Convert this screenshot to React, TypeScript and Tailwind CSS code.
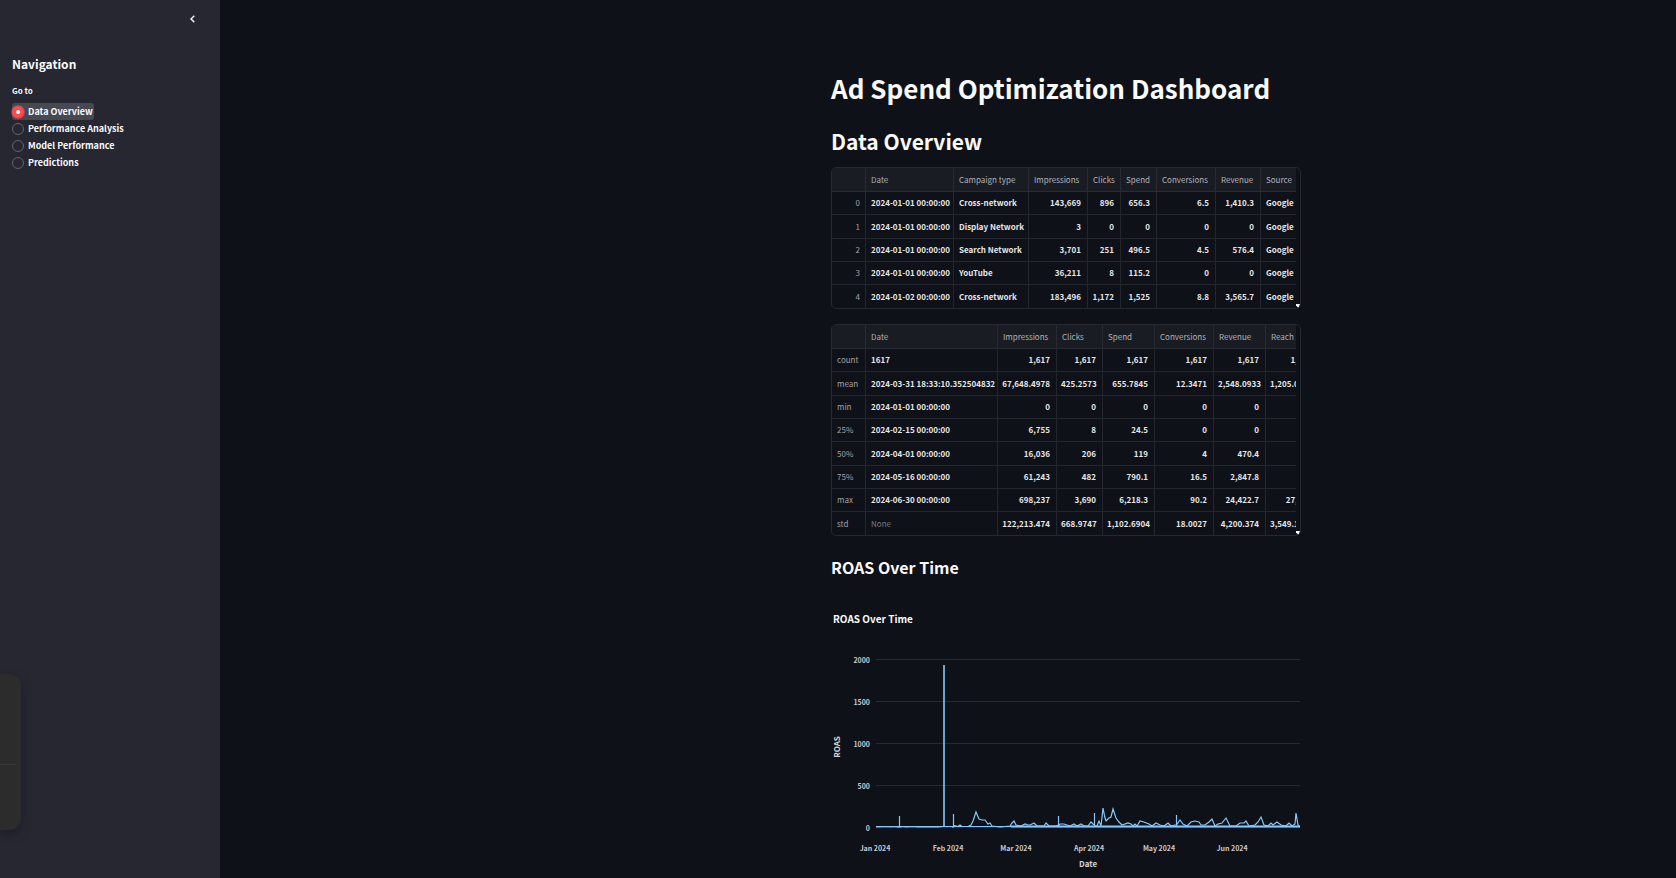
import React from "react";

type Column = { label: string; width: string; align: "left" | "right" };

const campaignColumns: Column[] = [
  { label: "", width: "w-[34px]", align: "right" },
  { label: "Date", width: "w-[88px]", align: "left" },
  { label: "Campaign type", width: "w-[75px]", align: "left" },
  { label: "Impressions", width: "w-[59px]", align: "right" },
  { label: "Clicks", width: "w-[33px]", align: "right" },
  { label: "Spend", width: "w-[36px]", align: "right" },
  { label: "Conversions", width: "w-[59px]", align: "right" },
  { label: "Revenue", width: "w-[45px]", align: "right" },
  { label: "Source", width: "w-[52px]", align: "left" },
];

const campaignRows: string[][] = [
  ["0", "2024-01-01 00:00:00", "Cross-network", "143,669", "896", "656.3", "6.5", "1,410.3", "Google"],
  ["1", "2024-01-01 00:00:00", "Display Network", "3", "0", "0", "0", "0", "Google"],
  ["2", "2024-01-01 00:00:00", "Search Network", "3,701", "251", "496.5", "4.5", "576.4", "Google"],
  ["3", "2024-01-01 00:00:00", "YouTube", "36,211", "8", "115.2", "0", "0", "Google"],
  ["4", "2024-01-02 00:00:00", "Cross-network", "183,496", "1,172", "1,525", "8.8", "3,565.7", "Google"],
];

const summaryColumns: Column[] = [
  { label: "", width: "w-[34px]", align: "left" },
  { label: "Date", width: "w-[132px]", align: "left" },
  { label: "Impressions", width: "w-[59px]", align: "right" },
  { label: "Clicks", width: "w-[46px]", align: "right" },
  { label: "Spend", width: "w-[52px]", align: "right" },
  { label: "Conversions", width: "w-[59px]", align: "right" },
  { label: "Revenue", width: "w-[52px]", align: "right" },
  { label: "Reach", width: "w-[53px]", align: "right" },
];

const summaryRows: string[][] = [
  ["count", "1617", "1,617", "1,617", "1,617", "1,617", "1,617", "1,617"],
  ["mean", "2024-03-31 18:33:10.352504832", "67,648.4978", "425.2573", "655.7845", "12.3471", "2,548.0933", "1,205.0124"],
  ["min", "2024-01-01 00:00:00", "0", "0", "0", "0", "0", ""],
  ["25%", "2024-02-15 00:00:00", "6,755", "8", "24.5", "0", "0", ""],
  ["50%", "2024-04-01 00:00:00", "16,036", "206", "119", "4", "470.4", ""],
  ["75%", "2024-05-16 00:00:00", "61,243", "482", "790.1", "16.5", "2,847.8", ""],
  ["max", "2024-06-30 00:00:00", "698,237", "3,690", "6,218.3", "90.2", "24,422.7", "27,112"],
  ["std", "None", "122,213.474", "668.9747", "1,102.6904", "18.0027", "4,200.374", "3,549.1022"],
];

function DataTable({ name, columns, rows }: { name: string; columns: Column[]; rows: string[][] }) {
  return (
    <div className="relative overflow-hidden rounded-[5px] border border-[#262830] pr-1">
      <div className="overflow-hidden">
        <table aria-label={name} className="w-0 table-fixed border-separate border-spacing-0 text-[8px] leading-3">
          <thead>
            <tr className="h-6">
              {columns.map((c) => (
                <th
                  key={c.label}
                  scope="col"
                  className={`${c.width} border-r border-b border-[#282b32] bg-[#1a1c24] px-[5px] py-0 text-left font-normal whitespace-nowrap text-[#b0b2b7]`}
                >
                  {c.label}
                </th>
              ))}
            </tr>
          </thead>
          <tbody>
            {rows.map((row) => (
              <tr
                key={row[0]}
                className="h-[23px] last:h-[23px]! [&:last-child>*]:border-b-0 [&:nth-child(3n+2)]:h-6"
              >
                {row.map((value, i) =>
                  i === 0 ? (
                    <th
                      key={i}
                      scope="row"
                      className={`${columns[i].align === "right" ? "text-right" : "text-left"} border-r border-b border-[#23262d] px-[5px] py-0 font-normal text-[#a0a2a8]`}
                    >
                      {value}
                    </th>
                  ) : (
                    <td
                      key={i}
                      className={`${columns[i].align === "right" ? "pr-[6px] pl-1 text-right" : "px-[5px] text-left"} ${value === "None" ? "font-normal text-[#777980]" : "font-bold text-[#e6e6e8]"} border-r border-b border-[#23262d] py-0 whitespace-nowrap`}
                    >
                      {value}
                    </td>
                  ),
                )}
              </tr>
            ))}
          </tbody>
        </table>
      </div>
      <svg className="absolute right-0 bottom-0 h-1 w-1" viewBox="0 0 4 4" aria-hidden="true">
        <path d="M0 0h4L2.500 4 0 1.500z" fill="#fafafa" />
      </svg>
    </div>
  );
}

const pages = ["Data Overview", "Performance Analysis", "Model Performance", "Predictions"];

function Sidebar() {
  const [page, setPage] = React.useState(pages[0]);
  return (
    <aside className="relative w-[220px] shrink-0 bg-[#262730]">
      <div className="flex h-[38px] items-center justify-end pr-5">
        <button type="button" aria-label="Collapse sidebar" className="flex h-4 w-4 items-center justify-center">
          <svg className="h-2 w-[5px]" viewBox="0 0 5 8" fill="none" stroke="#fafafa" strokeWidth="1.4" aria-hidden="true">
            <path d="M4.300.7 1 4l3.300 3.300" />
          </svg>
        </button>
      </div>
      <nav className="px-3 pt-4">
        <h2 className="text-xs leading-5 font-bold">Navigation</h2>
        <fieldset className="mt-[9px] flex flex-col items-start">
          <legend className="h-5 text-[8px] leading-4 font-bold">Go to</legend>
          {pages.map((p) => (
            <label
              key={p}
              className="flex h-[17px] items-center gap-1 rounded-[3px] pr-px text-[9px] leading-4 font-bold has-checked:bg-[#464852]"
            >
              <input
                type="radio"
                name="page"
                checked={page === p}
                onChange={() => setPage(p)}
                className="h-3 w-3 appearance-none rounded-full border border-[#62646c] bg-[#262730] checked:border-4 checked:border-[#ff4b4b] checked:bg-white checked:ring-1 checked:ring-[#ff4b4b]/50"
              />
              {p}
            </label>
          ))}
        </fieldset>
      </nav>
      <div className="absolute bottom-12 left-0 h-[156px] w-[21px] rounded-r-xl bg-[#2c2c2c] pt-[90px] shadow-[0_4px_12px_rgba(0,0,0,0.25)]">
        <div className="mr-[5px] h-px bg-[#363636]" />
      </div>
    </aside>
  );
}

const yTicks = [2000, 1500, 1000, 500, 0];
const xTicks: [string, number][] = [
  ["Jan 2024", 44],
  ["Feb 2024", 117],
  ["Mar 2024", 185],
  ["Apr 2024", 258],
  ["May 2024", 328],
  ["Jun 2024", 401],
];

const roasLine =
  "M45 168L58 167.500 60 168 62 167.500 68.500 168V157V168L73 167.500 75 168 84 167.500 86 168 107 168 112 167.500M121 168L122.500 168V155V168L123 166.500 125 167 127 167.500 129 166 131 167.500 137 167.500 140 166 142 162 145 153 148 160 151 161 154 161 157 165 159 164 161 167 169 168 179 167 181 164 183 162 185 166 190 167 194 165 197 166 199 166 203 164 206 167 213 167 215 164 218 167 225 167 227.500 166V157V167L229 165 233 165 236 166 239 167 243 165 246 167 250 165 253 167 257 167 260 163 262 165 263.500 166V154V167L266 167 268 162 270 167 272 149 274 159 275 162 278 159 280 158 282 150 285 159 288 163 291 166 297 164 300 165 302 167 304 165 306 167 309 162 313 163 318 165 321 167 325 164 329 166 333 167 337 164 340 167 344 166 345.500 166V156V166L349 161 352 165 356 167 360 163 364 162 368 163 370 166 374 166 378 163 381 160 384 167 387 165 391 164 395 159 399 167 405 167 409 164 413 164 415 162 418 167 424 166 427 163 430 158 433 166 437 167 440 164 442 166 446 163 450 166 455 167 458 164 461 167 464 165 465 154 467 166 469 168";

function RoasChart() {
  return (
    <svg
      className="block h-[270px] w-[469px]"
      viewBox="0 0 469 270"
      role="img"
      aria-label="ROAS Over Time"
      fontWeight="700"
    >
      <text x="2" y="24" fontSize="10" fill="#fafafa">
        ROAS Over Time
      </text>
      <g transform="translate(0 60)">
        {yTicks.map((t, i) => (
          <g key={t}>
            <path d="M45 0.500H469" transform={`translate(0 ${i * 42})`} stroke="#282a32" />
            <text x="39" y={i * 42 + 4} fontSize="7" textAnchor="end" fill="#c8c9cf">
              {t}
            </text>
          </g>
        ))}
        <path d={roasLine} fill="none" stroke="#83c9ff" strokeWidth="1.2" />
        <path d="M113 168V6" stroke="#83c9ff" strokeWidth="1.600" />
        <path d="M45 168.500H180" transform="translate(0 -1)" stroke="#83c9ff" />
        <path d="M180 167.500H469" stroke="#83c9ff" strokeWidth="2" />
        {xTicks.map(([label, x]) => (
          <text key={label} x={x} y="192" fontSize="7" textAnchor="middle" fill="#c8c9cf">
            {label}
          </text>
        ))}
        <g fontSize="8" textAnchor="middle" fill="#d4d5d9">
          <text x="257" y="208">
            Date
          </text>
          <text transform="translate(9 88) rotate(-90)">ROAS</text>
        </g>
      </g>
    </svg>
  );
}

export default function App() {
  return (
    <div className="flex min-h-screen bg-[#0e1117] font-['Noto_Sans_CJK_SC',sans-serif] text-[#fafafa]">
      <Sidebar />
      <main className="flex min-w-0 flex-1 justify-center pt-[67px] pl-[236px]">
        <div className="w-[470px]">
          <h1 className="text-[26px] leading-[42px] font-bold whitespace-nowrap">Ad Spend Optimization Dashboard</h1>
          <h2 className="mt-4 mb-[10px] text-[21px] leading-8 font-bold">Data Overview</h2>
          <div className="flex flex-col gap-[15px]">
            <DataTable name="Campaign data" columns={campaignColumns} rows={campaignRows} />
            <DataTable name="Summary statistics" columns={summaryColumns} rows={summaryRows} />
          </div>
          <h3 className="mt-[17px] mb-[18px] text-[16px] leading-7 font-bold">ROAS Over Time</h3>
          <RoasChart />
        </div>
      </main>
    </div>
  );
}
